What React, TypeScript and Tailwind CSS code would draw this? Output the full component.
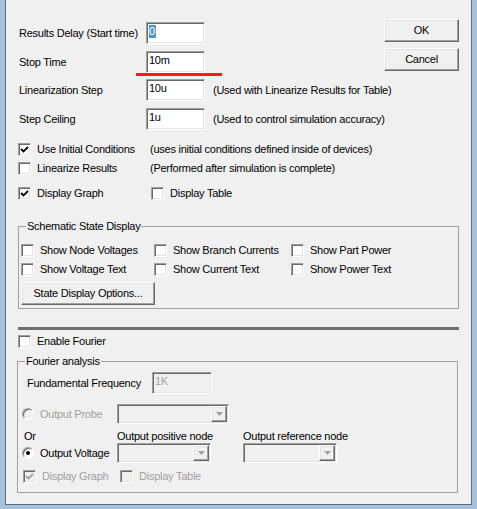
import React from 'react';

const sunken =
  'border border-t-[#a0a0a0] border-l-[#a0a0a0] border-b-white border-r-white shadow-[inset_1px_1px_0_#696969,inset_-1px_-1px_0_#e3e3e3]';
const raised =
  'border border-t-white border-l-white border-b-[#696969] border-r-[#696969] shadow-[inset_-1px_-1px_0_#a0a0a0,inset_1px_1px_0_#e3e3e3]';

function Check({ checked = false, disabled = false }: { checked?: boolean; disabled?: boolean }) {
  return (
    <span
      className={`flex items-center justify-center w-[13px] h-[13px] shrink-0 ${sunken} ${disabled ? 'bg-[#f0f0f0]' : 'bg-white'}`}
    >
      {checked && (
        <svg width="9" height="9" viewBox="0 0 9 9">
          <polyline
            points="1,4 3.5,6.5 8,2"
            fill="none"
            stroke={disabled ? '#a0a0a0' : '#000'}
            strokeWidth="1.8"
          />
        </svg>
      )}
    </span>
  );
}

function Radio({ checked = false, disabled = false }: { checked?: boolean; disabled?: boolean }) {
  return (
    <span
      className={`flex items-center justify-center w-[12px] h-[12px] shrink-0 rounded-full border border-t-[#a0a0a0] border-l-[#a0a0a0] border-b-white border-r-white shadow-[inset_1px_1px_0_#696969] ${disabled ? 'bg-[#f0f0f0]' : 'bg-white'}`}
    >
      {checked && <span className="w-[4px] h-[4px] rounded-full bg-black" />}
    </span>
  );
}

function CheckRow({ label, checked, disabled }: { label: string; checked?: boolean; disabled?: boolean }) {
  return (
    <div className="flex items-center">
      <Check checked={checked} disabled={disabled} />
      <span className={`ml-[6px] whitespace-nowrap ${disabled ? 'text-[#a0a0a0]' : ''}`}>{label}</span>
    </div>
  );
}

function Field({ w, value, disabled, selected }: { w: string; value: string; disabled?: boolean; selected?: boolean }) {
  return (
    <div className={`h-[22px] shrink-0 ${w} ${sunken} pl-[2px] pt-[2px] ${disabled ? 'bg-[#f0f0f0] text-[#a0a0a0]' : 'bg-white'}`}>
      {selected ? (
        <span className="inline-flex">
          <span className="bg-[#3399ff] text-white">{value}</span>
          <span className="w-px bg-[#e07b20]" />
        </span>
      ) : (
        value
      )}
    </div>
  );
}

function Combo({ w }: { w: string }) {
  return (
    <div className={`h-[20px] shrink-0 ${w} ${sunken} bg-[#f0f0f0] p-px flex justify-end`}>
      <div className={`w-[16px] h-full ${raised} bg-[#f0f0f0] flex items-center justify-center`}>
        <svg width="7" height="4" viewBox="0 0 7 4">
          <polygon points="0,0 7,0 3.5,4" fill="#a0a0a0" />
        </svg>
      </div>
    </div>
  );
}

function Btn({ w, label }: { w: string; label: string }) {
  return (
    <button className={`h-[23px] ${w} ${raised} bg-[#f0f0f0] text-[11px] leading-[13px] tracking-[-0.25px] text-black`}>
      {label}
    </button>
  );
}

export default function App() {
  return (
    <div className="w-[477px] h-[509px] bg-[#a7c1dc] pl-[5px] pr-[5px] pb-[4px] font-['Liberation_Sans',Arial,sans-serif] text-[11px] leading-[13px] tracking-[-0.25px] text-black">
      <div className="h-full bg-[#f0f0f0] border-l border-r border-b border-[#5b6e82] flex flex-col pl-[12px] pr-[12px]">
        {/* Simulation times + buttons */}
        <div className="flex pt-[19px]">
          <div className="flex-1 min-w-0 pt-[3px]">
            <div className="flex items-center h-[22px]">
              <span className="w-[128px] pl-px shrink-0 whitespace-nowrap">Results Delay (Start time)</span>
              <Field w="w-[59px]" value="0" selected />
            </div>
            <div className="relative flex items-center h-[22px] mt-[7px]">
              <span className="w-[128px] pl-px shrink-0">Stop Time</span>
              <Field w="w-[59px]" value="10m" />
              <div className="absolute left-[118px] top-[22px] w-[86px] h-[3px] bg-[#ee1c25]" />
            </div>
            <div className="flex items-center h-[22px] mt-[6px]">
              <span className="w-[128px] pl-px shrink-0">Linearization Step</span>
              <Field w="w-[59px]" value="10u" />
              <span className="ml-[8px] whitespace-nowrap">(Used with Linearize Results for Table)</span>
            </div>
            <div className="flex items-center h-[22px] mt-[7px]">
              <span className="w-[128px] pl-px shrink-0">Step Ceiling</span>
              <Field w="w-[59px]" value="1u" />
              <span className="ml-[8px] whitespace-nowrap">(Used to control simulation accuracy)</span>
            </div>
          </div>
          <div className="flex flex-col gap-[6px] shrink-0">
            <Btn w="w-[75px]" label="OK" />
            <Btn w="w-[75px]" label="Cancel" />
          </div>
        </div>

        {/* Options */}
        <div className="mt-[13px] flex items-center h-[13px]">
          <div className="w-[132px] shrink-0">
            <CheckRow label="Use Initial Conditions" checked />
          </div>
          <span className="whitespace-nowrap">(uses initial conditions defined inside of devices)</span>
        </div>
        <div className="mt-[6px] flex items-center h-[13px]">
          <div className="w-[132px] shrink-0">
            <CheckRow label="Linearize Results" />
          </div>
          <span className="whitespace-nowrap">(Performed after simulation is complete)</span>
        </div>
        <div className="mt-[12px] flex items-center h-[13px]">
          <div className="w-[133px] shrink-0">
            <CheckRow label="Display Graph" checked />
          </div>
          <CheckRow label="Display Table" />
        </div>

        {/* Schematic State Display */}
        <fieldset className="mt-[20px] border border-[#a0a0a0]">
          <legend className="ml-[7px] px-px leading-[13px]">Schematic State Display</legend>
          <div className="mt-[11px] pl-[2px] flex">
            <div className="w-[133px]"><CheckRow label="Show Node Voltages" /></div>
            <div className="w-[137px]"><CheckRow label="Show Branch Currents" /></div>
            <CheckRow label="Show Part Power" />
          </div>
          <div className="mt-[6px] pl-[2px] flex">
            <div className="w-[133px]"><CheckRow label="Show Voltage Text" /></div>
            <div className="w-[137px]"><CheckRow label="Show Current Text" /></div>
            <CheckRow label="Show Power Text" />
          </div>
          <div className="mt-[6px] mb-[3px] pl-[2px]">
            <Btn w="w-[134px]" label="State Display Options..." />
          </div>
        </fieldset>

        <div className="mt-[18px] h-[3px] bg-[#6e6e6e]" />

        <div className="mt-[5px]">
          <CheckRow label="Enable Fourier" />
        </div>

        {/* Fourier analysis */}
        <fieldset className="mt-[7px] -ml-px mr-px border border-[#a0a0a0]">
          <legend className="ml-[7px] px-px leading-[13px]">Fourier analysis</legend>
          <div className="mt-[4px] pl-[9px] flex items-center h-[22px]">
            <span className="w-[125px] shrink-0">Fundamental Frequency</span>
            <Field w="w-[60px]" value="1K" disabled />
          </div>
          <div className="mt-[10px] pl-[4px] flex items-center h-[20px]">
            <Radio disabled />
            <span className="ml-[6px] w-[77px] shrink-0 text-[#a0a0a0]">Output Probe</span>
            <Combo w="w-[112px]" />
          </div>
          <div className="mt-[6px] pl-[6px] flex items-center h-[13px]">
            <span className="w-[93px] shrink-0">Or</span>
            <span className="w-[126px] shrink-0">Output positive node</span>
            <span>Output reference node</span>
          </div>
          <div className="pl-[4px] flex items-center h-[20px]">
            <Radio checked />
            <span className="ml-[6px] w-[77px] shrink-0">Output Voltage</span>
            <Combo w="w-[94px]" />
            <div className="ml-[32px]">
              <Combo w="w-[94px]" />
            </div>
          </div>
          <div className="mt-[7px] mb-[9px] pl-[5px] flex items-center h-[13px]">
            <div className="w-[97px] shrink-0">
              <CheckRow label="Display Graph" checked disabled />
            </div>
            <CheckRow label="Display Table" disabled />
          </div>
        </fieldset>
      </div>
    </div>
  );
}
